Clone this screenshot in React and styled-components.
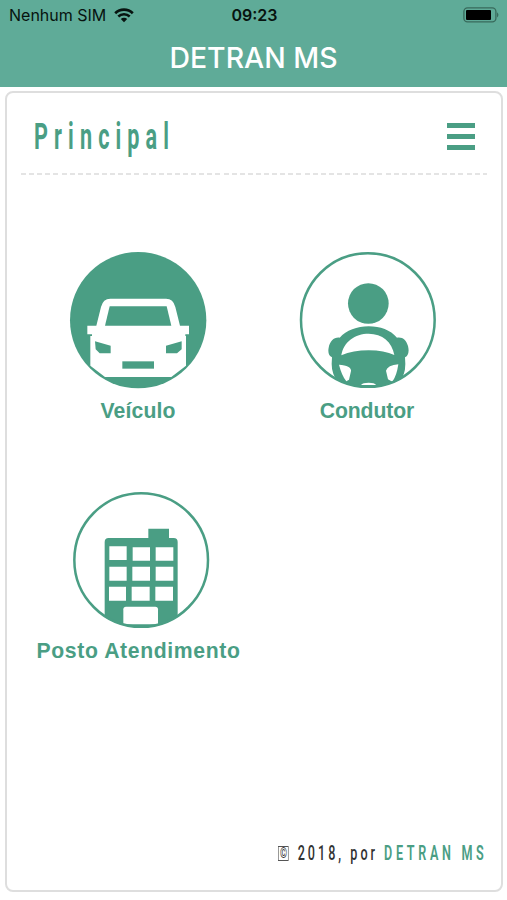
import React from "react";
import styled, { createGlobalStyle } from "styled-components";

const App = () => {
  return (
    <>
      <GlobalStyle />
      <StyledScreen>
        <StyledHeader>
          <StyledStatusBar>
            <StyledCarrier>
              <span>Nenhum SIM</span>
              <WifiIcon />
            </StyledCarrier>
            <StyledTime>09:23</StyledTime>
            <StyledBattery>
              <BatteryIcon />
            </StyledBattery>
          </StyledStatusBar>
          <StyledTitle>DETRAN MS</StyledTitle>
        </StyledHeader>

        <StyledCard>
          <StyledCardHeader>
            <StyledHeading>Principal</StyledHeading>
            <StyledMenuButton aria-label="Menu">
              <span />
              <span />
              <span />
            </StyledMenuButton>
          </StyledCardHeader>

          <StyledGrid>
            <StyledOption>
              <CarIcon />
              <StyledLabel $spacing="0.15px">Veículo</StyledLabel>
            </StyledOption>
            <StyledOption>
              <DriverIcon />
              <StyledLabel $shift="-2px" $spacing="-0.1px">
                Condutor
              </StyledLabel>
            </StyledOption>
            <StyledOption $shift="6px">
              <BuildingIcon />
              <StyledLabel $spacing="0.62px" $shift="1px">
                Posto Atendimento
              </StyledLabel>
            </StyledOption>
          </StyledGrid>

          <StyledFooter>
            <StyledCopyright>
              <StyledMark>©</StyledMark> 2018, por <strong>DETRAN MS</strong>
            </StyledCopyright>
          </StyledFooter>
        </StyledCard>
      </StyledScreen>
    </>
  );
};

const WifiIcon = () => (
  <svg width="20" height="15" viewBox="0 0 20 15" fill="none">
    <path d="M1.2 5.2a12.6 12.6 0 0 1 17.6 0" stroke="#07130f" strokeWidth="2.7" />
    <path d="M4.3 8.5a8.1 8.1 0 0 1 11.4 0" stroke="#07130f" strokeWidth="2.5" />
    <path d="M10 14.2 6.8 11a4.6 4.6 0 0 1 6.4 0Z" fill="#07130f" />
  </svg>
);

const BatteryIcon = () => (
  <svg width="37" height="16" viewBox="0 0 37 16">
    <rect x="0.9" y="0.9" width="32" height="14" rx="3.6" fill="none" stroke="#386a5b" strokeWidth="1.3" />
    <rect x="3" y="3" width="25" height="10" rx="1" fill="#000" />
    <path d="M34.2 5.3q2.3 2.6 0 5.2Z" fill="#2f5e50" />
  </svg>
);

const CarIcon = () => (
  <svg width="138" height="138" viewBox="27 19 414 414">
    <circle cx="234.5" cy="226.5" r="204.5" fill="#4a9e84" />
    <path
      d="M82 243h27l14-56q6-25 28-25h167q22 0 28 25l14 56h27v26h-11v5h2v89l-44 34H135l-44-34v-89h5v-5H82Z"
      fill="#fff"
    />
    <path d="M149 185h171l14 58H135Z" fill="#4a9e84" />
    <path d="M105 290l47 13v23h-33l-12-12Zm260 0v24l-14 12h-33v-23Z" fill="#4a9e84" />
    <path d="M187 350h95v22h-95Z" fill="#4a9e84" />
  </svg>
);

const DriverIcon = () => (
  <svg width="138" height="138" viewBox="27 19 414 414">
    <defs>
      <clipPath id="driver-clip">
        <circle cx="234" cy="226" r="203" />
      </clipPath>
    </defs>
    <circle cx="235" cy="176.5" r="61" fill="#4a9e84" />
    <g clipPath="url(#driver-clip)" fill="#4a9e84">
      <path
        fillRule="evenodd"
        d="M149 279C169 257 201 245 236 245s65 11 85 34c17-3 28 8 33 25 5 20-1 30-9 34l1 20q0 35-20 55l-91 20-90-20q-20-23-20-55l1-20c-9-4-13-14-10-29 4-20 16-32 33-30ZM154 332Q189 317 236 317t77 14C306 292 277 267 236 267s-75 24-82 65ZM147 360q8 32 22 50l8-5 6-26c1-10-10-17-36-19ZM325 359q-32 3-37 19l6 26 13 7q13-17 18-52Z"
      />
    </g>
    <path d="M213 421q5-7 23-7t22 7Z" fill="#fff" />
    <circle cx="233.5" cy="226" r="200.5" fill="none" stroke="#4a9e84" strokeWidth="7.5" />
  </svg>
);

const BuildingIcon = () => (
  <svg width="138" height="138" viewBox="127 19 414 414">
    <defs>
      <clipPath id="building-clip">
        <circle cx="334.5" cy="226" r="203" />
      </clipPath>
    </defs>
    <g clipPath="url(#building-clip)">
      <path
        d="M225 433V172q0-12 12-12h119v-28h62v28h14q12 0 12 12v261Z"
        fill="#4a9e84"
      />
      <path
        d="M239 185h52v41h-52Zm70 3h52v40h-52Zm69 0h53v40h-53ZM239 246h52v42h-52Zm69 0h53v42h-53Zm70 0h53v42h-53ZM238 306h51v42h-51Zm68 0h54v42h-54Zm71 0h53v42h-53Z"
        fill="#fff"
      />
      <path d="M281 419v-45q0-8 8-8h88q8 0 8 8v45Z" fill="#fff" />
    </g>
    <circle cx="334.5" cy="226" r="200.5" fill="none" stroke="#4a9e84" strokeWidth="7.5" />
  </svg>
);

const GlobalStyle = createGlobalStyle`
  * {
    box-sizing: border-box;
  }
  body {
    margin: 0;
    background: #fff;
  }
`;

const StyledScreen = styled.div`
  display: flex;
  flex-direction: column;
  height: 900px;
  background: #fff;
`;

const StyledHeader = styled.header`
  height: 87px;
  background: #5fab98;
  font-family: Inter, Roboto, sans-serif;
`;

const StyledStatusBar = styled.div`
  display: grid;
  grid-template-columns: 1fr auto 1fr;
  align-items: center;
  height: 30px;
  padding: 0 7px 0 9px;
  font-size: 16px;
  color: #07130f;
`;

const StyledCarrier = styled.div`
  display: flex;
  align-items: center;
  gap: 8px;
`;

const StyledTime = styled.div`
  font-weight: 600;
`;

const StyledBattery = styled.div`
  display: flex;
  justify-content: flex-end;
`;

const StyledTitle = styled.h1`
  margin: 0;
  font-size: 28.4px;
  font-weight: 500;
  line-height: 56px;
  text-align: center;
  color: #fff;
`;

const StyledCard = styled.main`
  display: flex;
  flex-direction: column;
  flex: 1;
  margin: 4px 4px 8px 5px;
  border: 2px solid #dedede;
  border-radius: 8px;
`;

const StyledCardHeader = styled.div`
  display: flex;
  justify-content: space-between;
  height: 82px;
  margin: 0 14px;
  padding: 29px 12px 0 13px;
  background: repeating-linear-gradient(90deg, #e4e4e4 0 5px, transparent 5px 8.1px)
    left bottom / 100% 2px no-repeat;
`;

/* narrow lettering with wide tracking */
const StyledHeading = styled.h2`
  margin: -1px 0 0;
  font-family: Roboto, sans-serif;
  font-size: 36px;
  font-weight: 700;
  line-height: 32px;
  letter-spacing: 10.2px;
  color: #4a9e84;
  transform: scaleX(0.6);
  transform-origin: left;
`;

const StyledMenuButton = styled.button`
  display: flex;
  flex-direction: column;
  gap: 6px;
  width: 28px;
  margin-top: 1px;
  padding: 0;
  border: 0;
  background: none;

  span {
    width: 28px;
    height: 5px;
    background: #4a9e84;
  }
`;

const StyledGrid = styled.div`
  display: grid;
  grid-template-columns: 230px 230px;
  grid-auto-rows: 240px;
  margin: 76px 0 0 16px;
`;

const StyledOption = styled.div`
  display: flex;
  flex-direction: column;
  align-items: center;

  svg {
    flex: none;
    margin-left: ${(props) => props.$shift || 0};
  }
`;

const StyledLabel = styled.span`
  margin-top: 10px;
  margin-left: ${(props) => props.$shift || 0};
  font-family: "Liberation Sans", Arial, sans-serif;
  font-size: 21.2px;
  font-weight: 700;
  line-height: 24px;
  letter-spacing: ${(props) => props.$spacing || "0"};
  color: #4a9e84;
`;

const StyledFooter = styled.footer`
  display: flex;
  justify-content: flex-end;
  margin-top: auto;
  padding: 0 14px 23px 0;
`;

const StyledCopyright = styled.p`
  margin: 0;
  font-family: Roboto, sans-serif;
  font-size: 21px;
  font-weight: 500;
  line-height: 28px;
  letter-spacing: 5px;
  white-space: nowrap;
  color: #333;
  transform: scaleX(0.6);
  transform-origin: right;

  strong {
    font-weight: 600;
    letter-spacing: 6.1px;
    color: #4a9e84;
  }
`;

const StyledMark = styled.span`
  display: inline-block;
  width: 17px;
  height: 15px;
  margin-right: 5px;
  border: 1px solid #555;
  font-size: 15px;
  line-height: 13px;
  letter-spacing: 0;
  text-align: center;
  vertical-align: 2px;
`;

export default App;
